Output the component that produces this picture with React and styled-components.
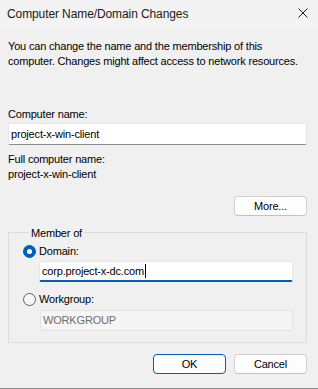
import React from 'react';
import styled, { createGlobalStyle } from 'styled-components';

const UI_FONT = '"Liberation Sans", Arial, sans-serif';

const GlobalStyle = createGlobalStyle`
  html, body {
    margin: 0;
    padding: 0;
    background: #f0f0f0;
  }
  * {
    box-sizing: border-box;
  }
`;

const Window = styled.div`
  width: 318px;
  height: 389px;
  background: #f0f0f0;
  border-bottom: 1px solid #8a8a8a;
  font-family: ${UI_FONT};
  font-size: 11px;
  letter-spacing: -0.18px;
  line-height: 15px;
  color: #000;
  display: flex;
  flex-direction: column;
  overflow: hidden;
`;

const TitleBar = styled.div`
  height: 29px;
  flex: none;
  background: #f3f3f3;
  display: flex;
  align-items: flex-start;
  justify-content: space-between;
  padding: 7px 10px 0 7px;
`;

const Title = styled.div`
  font-size: 12px;
  letter-spacing: -0.1px;
  color: #1a1a1a;
`;

const CloseButton = styled.div`
  width: 10px;
  height: 10px;
  margin-top: 1px;
  display: flex;
`;

const Body = styled.div`
  display: flex;
  flex-direction: column;
  padding: 0 11px 0 8px;
`;

const Intro = styled.p`
  margin: 10px 0 0;
`;

const Label = styled.div`
  margin-top: ${p => p.$gap || 0}px;
`;

const TextField = styled.div`
  height: ${p => p.$h || 22}px;
  margin-top: ${p => p.$gap || 0}px;
  margin-left: ${p => p.$indent || 0}px;
  background: ${p => (p.$disabled ? '#f5f5f5' : '#fff')};
  border: 1px solid ${p => (p.$disabled ? '#e3e3e3' : '#e6e6e6')};
  border-bottom: ${p =>
    p.$focused ? '2px solid #005fb8' : p.$disabled ? '1px solid #e3e3e3' : '1px solid #8a8a8a'};
  border-radius: 2px;
  padding: 0 2px;
  display: flex;
  align-items: center;
  color: ${p => (p.$disabled ? '#6d6d6d' : '#000')};
`;

const Caret = styled.span`
  width: 1px;
  height: 14px;
  background: #000;
  margin-left: 1px;
`;

const ButtonRow = styled.div`
  display: flex;
  justify-content: flex-end;
  gap: 8px;
  margin-top: ${p => p.$gap || 0}px;
`;

const Button = styled.div`
  width: 73px;
  height: 20px;
  background: #fdfdfd;
  border: 1px solid ${p => (p.$default ? '#005fb8' : '#d0d0d0')};
  border-bottom-color: ${p => (p.$default ? '#005fb8' : '#c2c2c2')};
  border-radius: 4px;
  display: flex;
  align-items: center;
  justify-content: center;
  color: #000;
`;

const Group = styled.fieldset`
  margin: 7px 0 0;
  padding: 3px 13px 11px 14px;
  border: 1px solid #dcdcdc;
  border-radius: 0;
  display: flex;
  flex-direction: column;
`;

const Legend = styled.legend`
  margin-left: 6px;
  padding: 3px 2px 0;
  line-height: 15px;
`;

const RadioRow = styled.label`
  display: flex;
  align-items: center;
  gap: 3px;
  height: 15px;
  margin-top: ${p => p.$gap || 0}px;
`;

const RadioDot = styled.span`
  width: 13px;
  height: 13px;
  border-radius: 50%;
  flex: none;
  background: ${p => (p.$checked ? '#005fb8' : '#f7f7f7')};
  border: 1px solid ${p => (p.$checked ? '#005fb8' : '#5e5e5e')};
  display: flex;
  align-items: center;
  justify-content: center;
  &::after {
    content: '';
    display: ${p => (p.$checked ? 'block' : 'none')};
    width: 5px;
    height: 5px;
    border-radius: 50%;
    background: #fff;
  }
`;

const Radio = ({ checked, gap, children }) => (
  <RadioRow $gap={gap}>
    <RadioDot $checked={checked} />
    <span>{children}</span>
  </RadioRow>
);

const App = () => (
  <>
    <GlobalStyle />
    <Window>
      <TitleBar>
        <Title>Computer Name/Domain Changes</Title>
        <CloseButton>
          <svg width="10" height="10" viewBox="0 0 10 10">
            <path d="M0.5 0.5 L9.5 9.5 M9.5 0.5 L0.5 9.5" stroke="#1a1a1a" strokeWidth="1" />
          </svg>
        </CloseButton>
      </TitleBar>
      <Body>
        <Intro>
          You can change the name and the membership of this
          <br />
          computer. Changes might affect access to network resources.
        </Intro>
        <Label $gap={38}>Computer name:</Label>
        <TextField $gap={1}>project-x-win-client</TextField>
        <Label $gap={7}>Full computer name:</Label>
        <Label>project-x-win-client</Label>
        <ButtonRow $gap={14}>
          <Button>More...</Button>
        </ButtonRow>
        <Group>
          <Legend>Member of</Legend>
          <Radio checked>Domain:</Radio>
          <TextField $gap={2} $indent={16} $h={21} $focused>
            corp.project-x-dc.com
            <Caret />
          </TextField>
          <Radio gap={10}>Workgroup:</Radio>
          <TextField $gap={3} $indent={17} $h={21} $disabled>
            WORKGROUP
          </TextField>
        </Group>
        <ButtonRow $gap={11}>
          <Button $default>OK</Button>
          <Button>Cancel</Button>
        </ButtonRow>
      </Body>
    </Window>
  </>
);

export default App;
